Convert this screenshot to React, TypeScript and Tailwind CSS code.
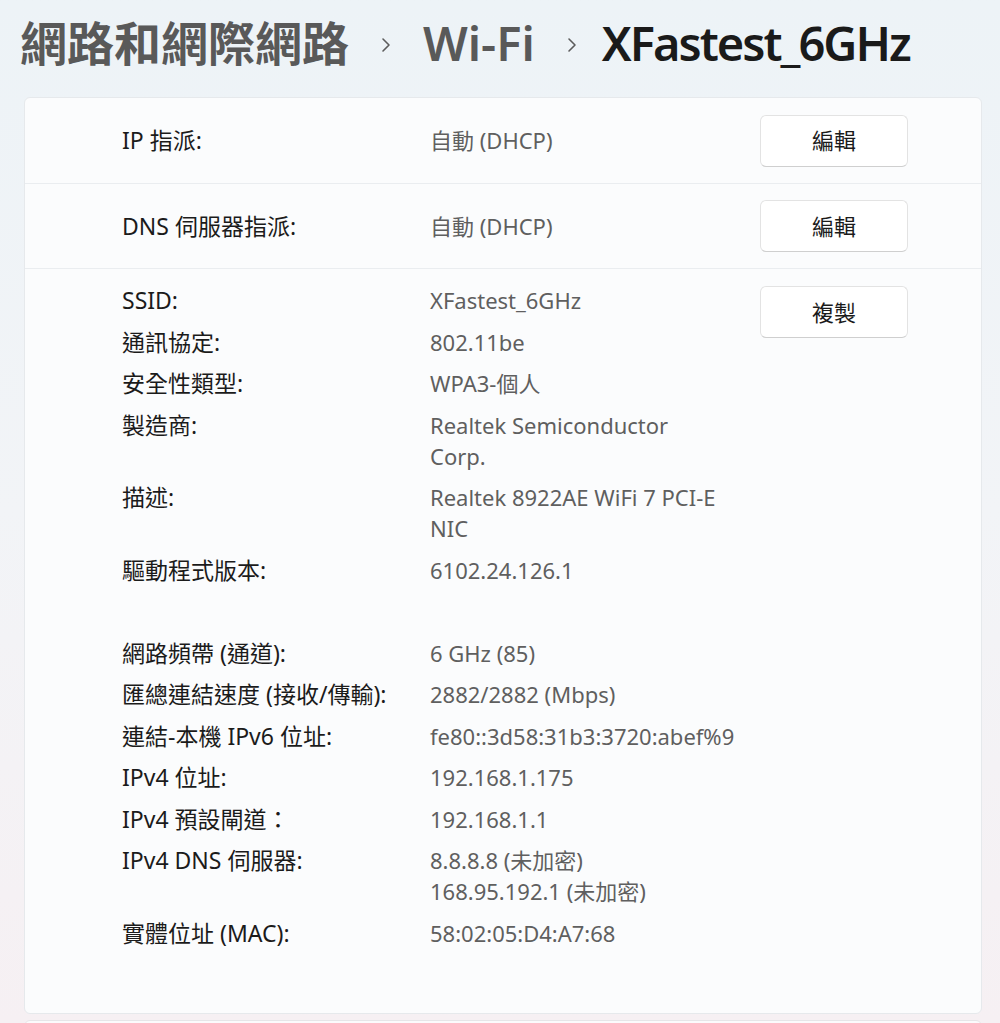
import React from 'react';

const rows: { label: string; value: string[] }[] = [
  { label: 'SSID:', value: ['XFastest_6GHz'] },
  { label: '通訊協定:', value: ['802.11be'] },
  { label: '安全性類型:', value: ['WPA3-個人'] },
  { label: '製造商:', value: ['Realtek Semiconductor', 'Corp.'] },
  { label: '描述:', value: ['Realtek 8922AE WiFi 7 PCI-E', 'NIC'] },
  { label: '驅動程式版本:', value: ['6102.24.126.1'] },
  { label: '', value: [''] },
  { label: '網路頻帶 (通道):', value: ['6 GHz (85)'] },
  { label: '匯總連結速度 (接收/傳輸):', value: ['2882/2882 (Mbps)'] },
  { label: '連結-本機 IPv6 位址:', value: ['fe80::3d58:31b3:3720:abef%9'] },
  { label: 'IPv4 位址:', value: ['192.168.1.175'] },
  { label: 'IPv4 預設閘道：', value: ['192.168.1.1'] },
  { label: 'IPv4 DNS 伺服器:', value: ['8.8.8.8 (未加密)', '168.95.192.1 (未加密)'] },
  { label: '實體位址 (MAC):', value: ['58:02:05:D4:A7:68'] },
];

function Chevron() {
  return (
    <svg width="14" height="18" viewBox="0 0 14 18" className="mx-[30px] mt-[2px]" fill="none">
      <path d="M4 3l6 6-6 6" stroke="#5c5c5c" strokeWidth="1.6" strokeLinecap="round" strokeLinejoin="round" />
    </svg>
  );
}

function Btn({ children }: { children: React.ReactNode }) {
  return (
    <button className="w-[148px] h-[52px] shrink-0 rounded-[6px] bg-white border border-[#e3e3e3] border-b-[#cfcfcf] text-[22px] text-[#1b1b1b]">
      {children}
    </button>
  );
}

export default function App() {
  return (
    <div
      className="w-[1000px] h-[1023px] overflow-hidden bg-gradient-to-b from-[#edf3f7] via-[#f2f4f7] to-[#f6f0f3] text-[#1b1b1b]"
      style={{ fontFamily: '"Noto Sans", "Noto Sans CJK TC", sans-serif' }}
    >
      {/* breadcrumb */}
      <div className="h-[97px] flex items-center pl-[20px] pb-[10px] text-[47px] font-semibold leading-none">
        <span className="text-[#595959]">網路和網際網路</span>
        <Chevron />
        <span className="text-[#595959]">Wi-Fi</span>
        <Chevron />
        <span className="ml-[-7px] text-[#1a1a1a] tracking-[-2px]">XFastest_6GHz</span>
      </div>

      <div className="ml-[24px] w-[958px] rounded-[6px] bg-[#fbfcfd] border border-[#e6e9ec]">
        <div className="h-[86px] flex items-center pl-[97px] border-b border-[#eaedf0]">
          <div className="w-[308px] text-[23px]">IP 指派:</div>
          <div className="w-[330px] text-[22px] text-[#5f5f5f]">自動 (DHCP)</div>
          <Btn>編輯</Btn>
        </div>
        <div className="h-[85px] flex items-center pl-[97px] border-b border-[#eaedf0]">
          <div className="w-[308px] text-[23px]">DNS 伺服器指派:</div>
          <div className="w-[330px] text-[22px] text-[#5f5f5f]">自動 (DHCP)</div>
          <Btn>編輯</Btn>
        </div>
        <div className="flex items-start pl-[97px] pt-[16px] pb-[64px]">
          <div className="flex flex-col gap-[10.5px] leading-[31px]">
            {rows.map((r, i) => (
              <div key={i} className="flex">
                <div className="w-[308px] shrink-0 text-[23px]">{r.label || '\u00a0'}</div>
                <div className="w-[300px] shrink-0 text-[22px] text-[#5f5f5f] whitespace-nowrap">
                  {r.value.map((v, j) => (
                    <div key={j}>{v || '\u00a0'}</div>
                  ))}
                </div>
              </div>
            ))}
          </div>
          <div className="ml-[30px] pt-[1px]">
            <Btn>複製</Btn>
          </div>
        </div>
      </div>

      <div className="ml-[24px] mt-[6px] w-[958px] h-[40px] rounded-[6px] bg-[#fbfbfc] border border-[#e6e6e8]" />
    </div>
  );
}
